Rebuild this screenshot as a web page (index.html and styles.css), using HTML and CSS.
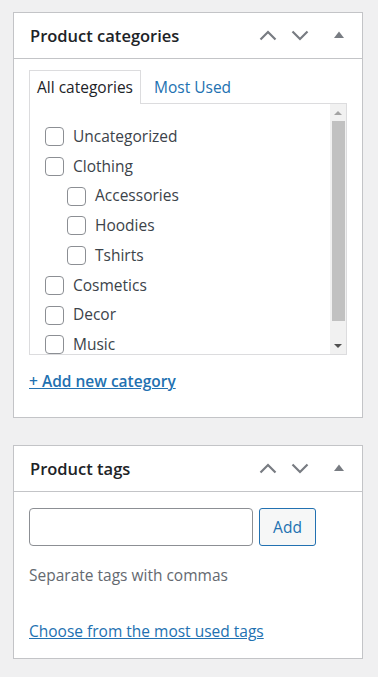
FILE: index.html
```html
<!DOCTYPE html>
<html>
<head>
<title>Product data</title>
<link rel="stylesheet" href="styles.css">
</head>
<body>
<div class="postbox" id="product_cat_box">
	<div class="postbox_header">
		<h2 class="hndle">Product categories</h2>
		<div class="handle_actions">
			<button class="handle_btn up_btn"><svg width="18" height="11" viewBox="0 0 18 11"><path d="M1.5 9.5 L9 2 L16.5 9.5" fill="none" stroke="#787c82" stroke-width="2.2"/></svg></button>
			<button class="handle_btn down_btn"><svg width="18" height="11" viewBox="0 0 18 11"><path d="M1.5 1.5 L9 9 L16.5 1.5" fill="none" stroke="#787c82" stroke-width="2.2"/></svg></button>
			<button class="handle_btn toggle_btn"><svg width="10" height="7" viewBox="0 0 10 7"><path d="M0 7 L5 0.5 L10 7 Z" fill="#787c82"/></svg></button>
		</div>
	</div>
	<div class="inside">
		<ul class="cat_tabs">
			<li class="tab_active">All categories</li>
			<li><a href="#">Most Used</a></li>
		</ul>
		<div class="cat_panel">
			<ul class="cat_checklist">
				<li><label><input type="checkbox"> Uncategorized</label></li>
				<li><label><input type="checkbox"> Clothing</label>
					<ul class="children">
						<li><label><input type="checkbox"> Accessories</label></li>
						<li><label><input type="checkbox"> Hoodies</label></li>
						<li><label><input type="checkbox"> Tshirts</label></li>
					</ul>
				</li>
				<li><label><input type="checkbox"> Cosmetics</label></li>
				<li><label><input type="checkbox"> Decor</label></li>
				<li><label><input type="checkbox"> Music</label></li>
			</ul>
			<div class="scroll_bar">
				<div class="scroll_btn"><span class="arrow_up"></span></div>
				<div class="scroll_track"><div class="scroll_thumb"></div></div>
				<div class="scroll_btn"><span class="arrow_down"></span></div>
			</div>
		</div>
		<a class="add_cat_link" href="#">+ Add new category</a>
	</div>
</div>

<div class="postbox" id="tags_box">
	<div class="postbox_header">
		<h2 class="hndle">Product tags</h2>
		<div class="handle_actions">
			<button class="handle_btn up_btn"><svg width="18" height="11" viewBox="0 0 18 11"><path d="M1.5 9.5 L9 2 L16.5 9.5" fill="none" stroke="#787c82" stroke-width="2.2"/></svg></button>
			<button class="handle_btn down_btn"><svg width="18" height="11" viewBox="0 0 18 11"><path d="M1.5 1.5 L9 9 L16.5 1.5" fill="none" stroke="#787c82" stroke-width="2.2"/></svg></button>
			<button class="handle_btn toggle_btn"><svg width="10" height="7" viewBox="0 0 10 7"><path d="M0 7 L5 0.5 L10 7 Z" fill="#787c82"/></svg></button>
		</div>
	</div>
	<div class="inside tags_inside">
		<div class="tag_add_row">
			<input class="tag_edit" type="text">
			<button class="add_btn">Add</button>
		</div>
		<p class="howto">Separate tags with commas</p>
		<a class="tag_cloud_link" href="#">Choose from the most used tags</a>
	</div>
</div>
</body>
</html>
```

FILE: styles.css
```css
body
{
	margin : 0;
	padding : 12px 15px 20px 13px;
	background-color : #f0f0f1;
	font-family : "Open Sans", sans-serif;
	font-size : 15.5px;
	line-height : 21px;
	color : #3c434a;
}
ul
{
	list-style : none;
	margin : 0;
	padding : 0;
}
a
{
	color : #2271b1;
}
.postbox
{
	background-color : white;
	border : 1px solid #c3c4c7;
	width : 348px;
	margin-bottom : 27px;
}
.postbox_header
{
	display : flex;
	align-items : center;
	height : 45px;
	border-bottom : 1px solid #c3c4c7;
}
.hndle
{
	flex : 1;
	margin : 0;
	padding-left : 16px;
	font-size : 16.5px;
	font-weight : 600;
	color : #1d2327;
}
.handle_actions
{
	display : flex;
	height : 100%;
}
.handle_btn
{
	display : flex;
	align-items : center;
	justify-content : center;
	background : none;
	border : none;
	padding : 0;
	width : 32px;
	height : 100%;
}
.toggle_btn
{
	width : 46px;
	padding-bottom : 2px;
}
.inside
{
	padding : 11px 15px 25px 15px;
}
.cat_tabs
{
	display : flex;
	align-items : flex-end;
	margin-bottom : -1px;
}
.cat_tabs li
{
	height : 33px;
	line-height : 33px;
	padding : 0 7px;
	margin-right : 6px;
}
.cat_tabs a
{
	text-decoration : none;
}
.cat_tabs .tab_active
{
	border : 1px solid #dcdcde;
	border-bottom : none;
	background-color : white;
	color : #1d2327;
	position : relative;
	z-index : 1;
}
.cat_panel
{
	display : flex;
	border : 1px solid #dcdcde;
	height : 250px;
	overflow : hidden;
}
.cat_checklist
{
	flex : 1;
	padding : 18px 0 18px 15px;
}
.cat_checklist li
{
	line-height : 29.7px;
}
.cat_checklist .children
{
	padding-left : 22px;
}
.cat_checklist label
{
	display : flex;
	align-items : center;
	gap : 9px;
	white-space : nowrap;
}
.cat_checklist input
{
	appearance : none;
	margin : 0;
	width : 19px;
	height : 19px;
	border : 1px solid #8c8f94;
	border-radius : 4px;
	background-color : white;
}
.scroll_bar
{
	display : flex;
	flex-direction : column;
	width : 16px;
	background-color : #f1f1f1;
}
.scroll_btn
{
	display : flex;
	align-items : center;
	justify-content : center;
	height : 17px;
}
.arrow_up
{
	border-left : 4px solid transparent;
	border-right : 4px solid transparent;
	border-bottom : 4px solid #a3a3a3;
}
.arrow_down
{
	border-left : 4px solid transparent;
	border-right : 4px solid transparent;
	border-top : 4px solid #505050;
}
.scroll_track
{
	flex : 1;
	padding : 0 1px 0 2px;
}
.scroll_thumb
{
	height : 200px;
	background-color : #c1c1c1;
}
.add_cat_link
{
	display : inline-block;
	margin-top : 16px;
	font-weight : 600;
}
.tags_inside
{
	padding : 16px 15px 16px 15px;
}
.tag_add_row
{
	display : flex;
	gap : 6px;
}
.tag_edit
{
	width : 224px;
	height : 38px;
	box-sizing : border-box;
	border : 1px solid #8c8f94;
	border-radius : 4px;
	margin : 0;
}
.add_btn
{
	width : 57px;
	height : 38px;
	border : 1px solid #2271b1;
	border-radius : 3px;
	background-color : #f6f7f7;
	color : #2271b1;
	font-family : "Open Sans", sans-serif;
	font-size : 15.5px;
}
.howto
{
	margin : 19px 0 0 0;
	color : #646970;
}
.tag_cloud_link
{
	display : inline-block;
	margin-top : 35px;
}
```
